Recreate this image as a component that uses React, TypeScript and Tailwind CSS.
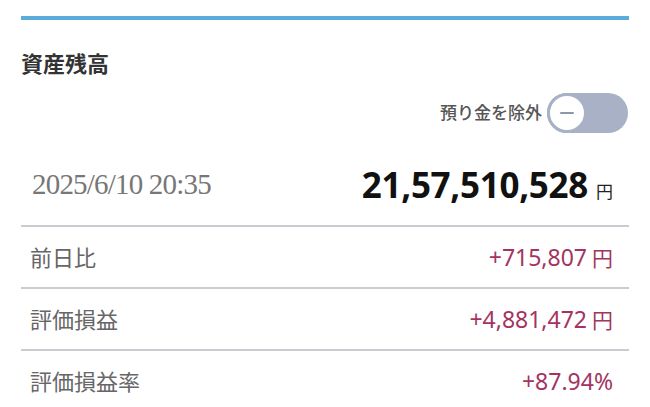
const sans = "font-['Noto_Sans','Noto_Sans_CJK_JP',sans-serif]";

const rows = [
  { label: "前日比", value: "+715,807", unit: "円" },
  { label: "評価損益", value: "+4,881,472", unit: "円" },
  { label: "評価損益率", value: "+87.94%", unit: "" },
];

const Toggle = () => {
  return (
    <div className="flex h-[40px] w-[81px] items-center rounded-full bg-[#a9b1c6]">
      <div className="flex h-[40px] w-[40px] items-center justify-center rounded-full border-[3px] border-[#a9b1c6] bg-white">
        <div className="h-[2px] w-[14px] rounded-full bg-[#8d96ab]" />
      </div>
    </div>
  );
};

const App = () => {
  return (
    <div className={`h-[407px] w-[650px] overflow-hidden bg-white px-[21px] pt-[16px] ${sans}`}>
      <div className="h-[4px] bg-[#5aaddb]" />

      <h2 className="mt-[28px] h-[30px] text-[22px] font-bold leading-[30px] text-[#333]">
        資産残高
      </h2>

      <div className="mt-[15px] flex items-center justify-end gap-[5px] pr-[1px]">
        <span className="text-[17px] font-medium text-[#555]">預り金を除外</span>
        <Toggle />
      </div>

      <div className="flex h-[92px] items-center justify-between pl-[11px] pr-[16px] pt-[12px]">
        <span className="font-['Liberation_Serif',serif] text-[29px] tracking-[-0.8px] text-[#777]">
          2025/6/10 20:35
        </span>
        <div className="flex items-baseline">
          <span className="text-[35px] font-bold tracking-[-0.3px] text-[#111]">21,57,510,528</span>
          <span className="ml-[8px] text-[17px] text-[#222]">円</span>
        </div>
      </div>

      {rows.map((row) => (
        <div
          key={row.label}
          className="flex h-[62px] items-center justify-between border-t-2 border-[#c9ccd1] pl-[9px] pr-[16px]"
        >
          <span className="text-[22px] text-[#666]">{row.label}</span>
          <span className="flex items-baseline text-[23px] text-[#a3345f]">
            {row.value}
            {row.unit && <span className="ml-[5px] text-[21px]">{row.unit}</span>}
          </span>
        </div>
      ))}
    </div>
  );
};

export default App;
